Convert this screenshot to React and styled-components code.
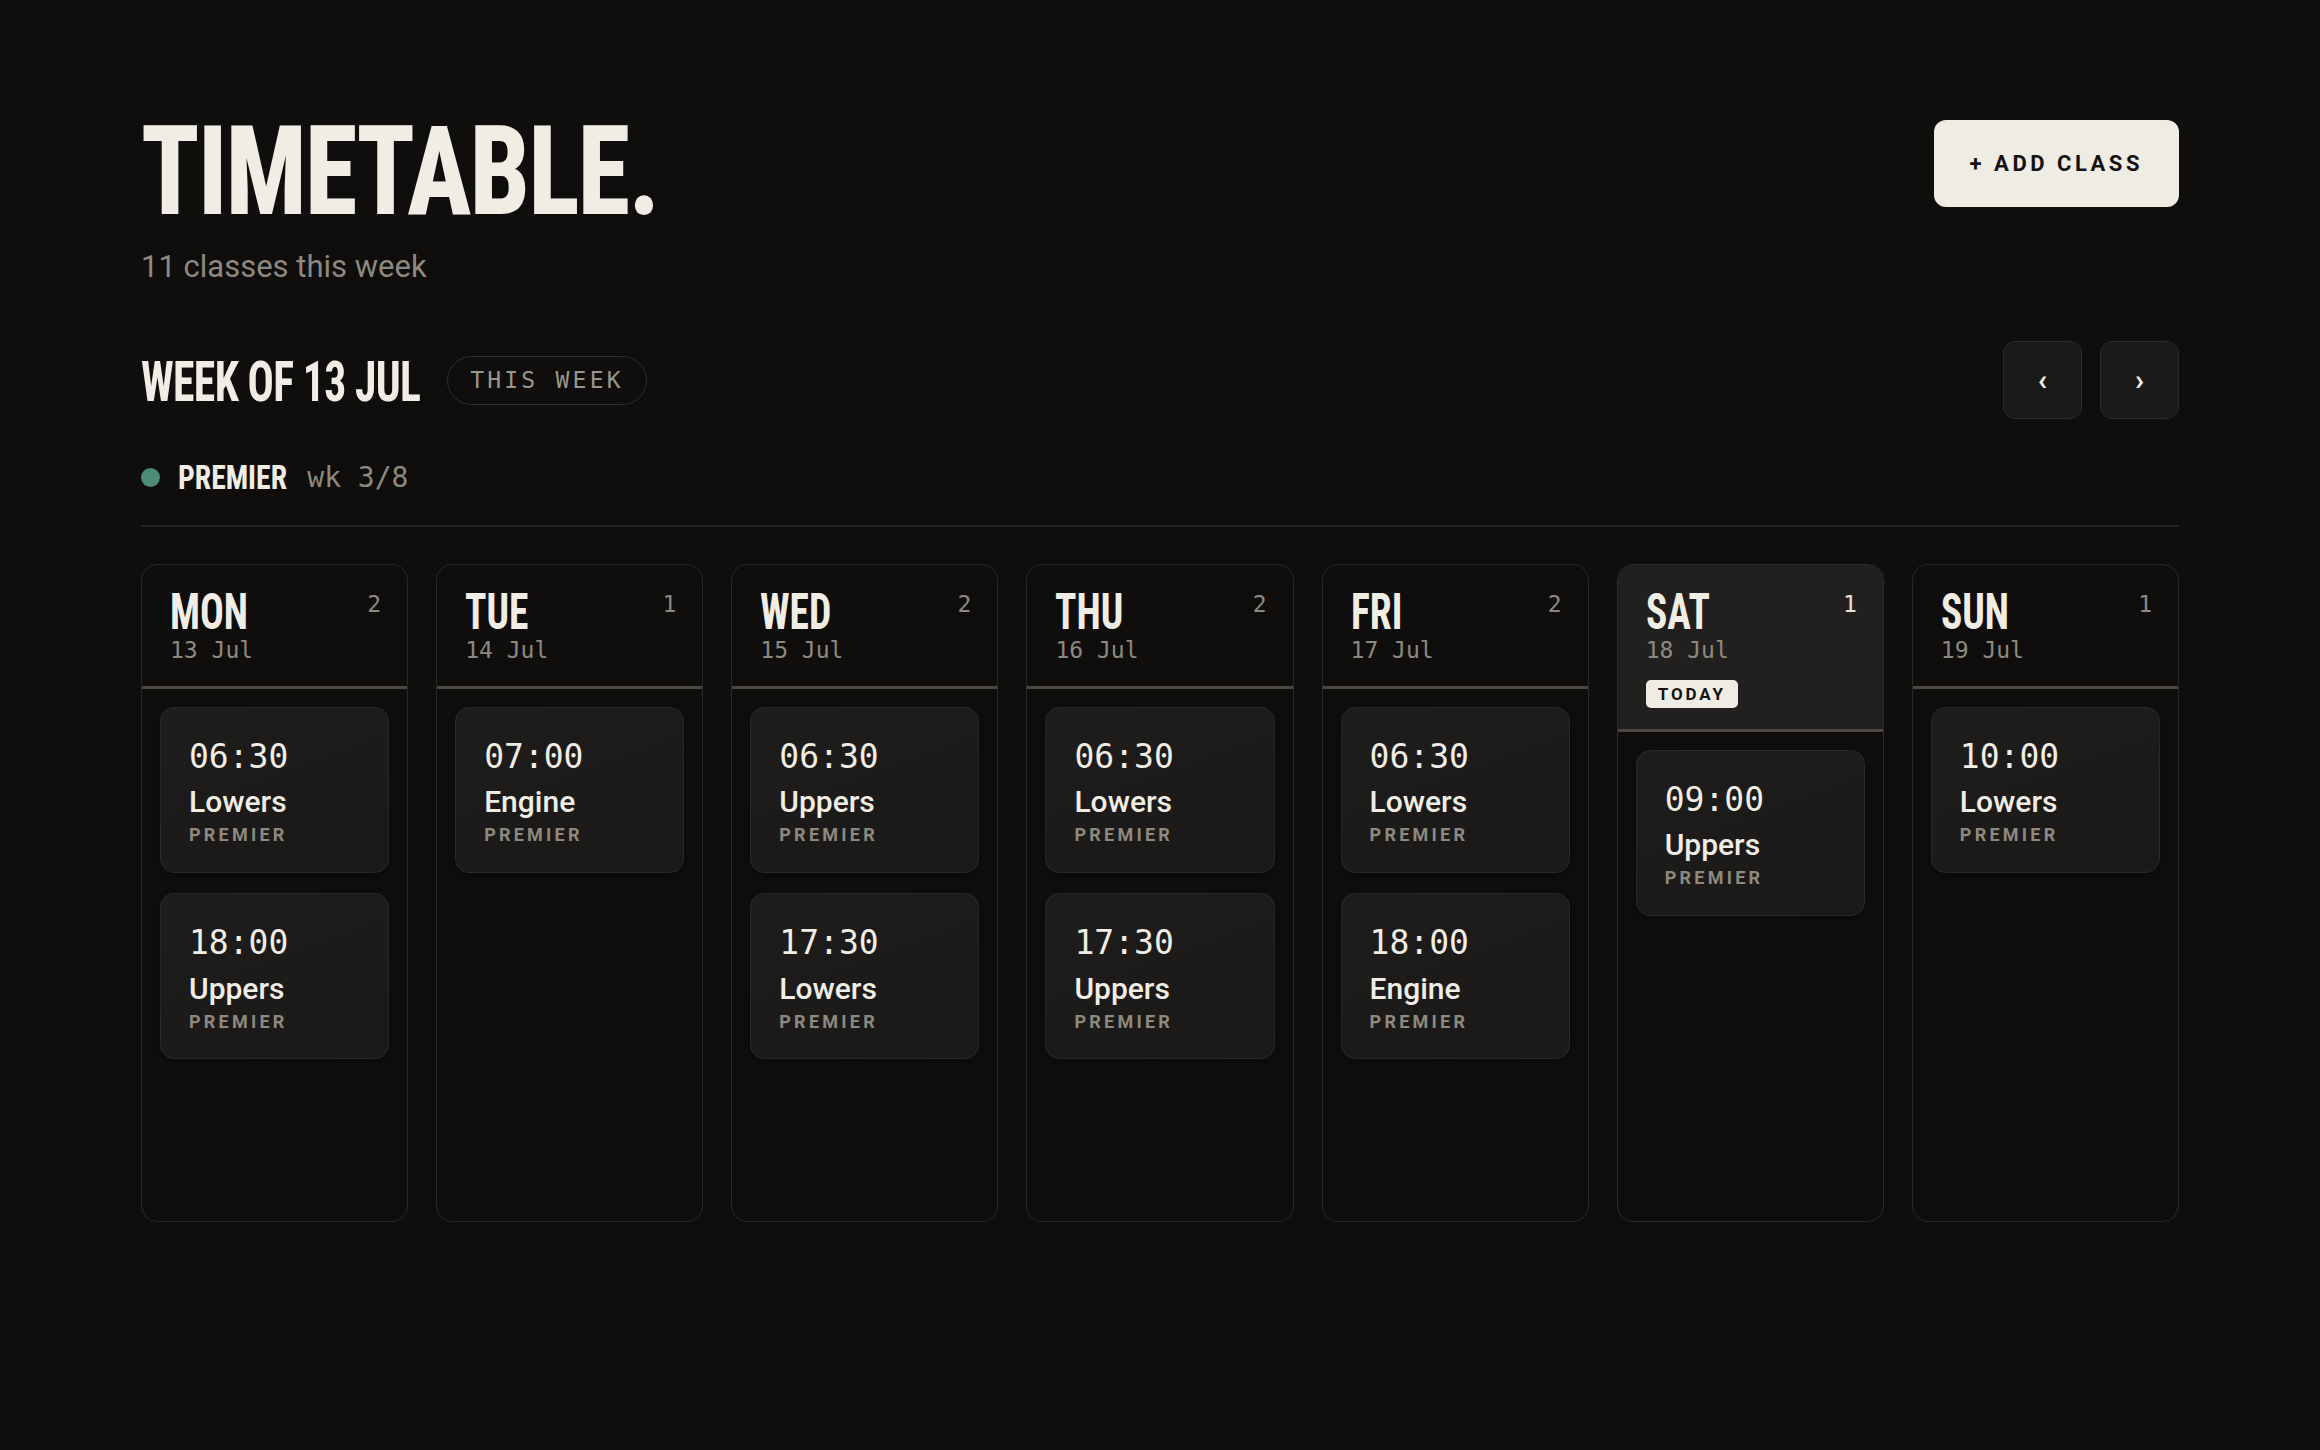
import React from 'react';
import styled, { createGlobalStyle, css } from 'styled-components';

const display = `"Roboto Condensed", "Liberation Sans Narrow", "DejaVu Sans Condensed", "DejaVu Sans", sans-serif`;
const body = `Roboto, "Liberation Sans", sans-serif`;
const mono = `"DejaVu Sans Mono", "Liberation Mono", monospace`;

// the design face is narrower than any condensed family we have, so squeeze it
const squeeze = (x) => css`
    display: inline-block;
    transform: scaleX(${x});
    transform-origin: left center;
`;

const GlobalStyle = createGlobalStyle`
    html, body {
        margin: 0;
        padding: 0;
        background: #0f0e0c;
    }
    body {
        font-family: ${body};
        color: #f0ede5;
    }
    * {
        box-sizing: border-box;
    }
`;

const days = [
    { name: 'MON', date: '13 Jul', classes: [{ time: '06:30', title: 'Lowers' }, { time: '18:00', title: 'Uppers' }] },
    { name: 'TUE', date: '14 Jul', classes: [{ time: '07:00', title: 'Engine' }] },
    { name: 'WED', date: '15 Jul', classes: [{ time: '06:30', title: 'Uppers' }, { time: '17:30', title: 'Lowers' }] },
    { name: 'THU', date: '16 Jul', classes: [{ time: '06:30', title: 'Lowers' }, { time: '17:30', title: 'Uppers' }] },
    { name: 'FRI', date: '17 Jul', classes: [{ time: '06:30', title: 'Lowers' }, { time: '18:00', title: 'Engine' }] },
    { name: 'SAT', date: '18 Jul', today: true, classes: [{ time: '09:00', title: 'Uppers' }] },
    { name: 'SUN', date: '19 Jul', classes: [{ time: '10:00', title: 'Lowers' }] },
];

export default function App() {
    const total = days.reduce((n, d) => n + d.classes.length, 0);

    return (
        <>
            <GlobalStyle />
            <Page>
                <TopRow>
                    <div>
                        <Title>TIMETABLE.</Title>
                        <Subtitle>{total} classes this week</Subtitle>
                    </div>
                    <AddButton>+ ADD CLASS</AddButton>
                </TopRow>

                <WeekRow>
                    <WeekLeft>
                        <WeekTitle>WEEK OF 13 JUL</WeekTitle>
                        <Pill>THIS WEEK</Pill>
                    </WeekLeft>
                    <NavGroup>
                        <NavButton aria-label="Previous week">‹</NavButton>
                        <NavButton aria-label="Next week">›</NavButton>
                    </NavGroup>
                </WeekRow>

                <Legend>
                    <Dot />
                    <LegendName>PREMIER</LegendName>
                    <LegendMeta>wk 3/8</LegendMeta>
                </Legend>

                <Divider />

                <Grid>
                    {days.map((day) => (
                        <Column key={day.name} $today={day.today}>
                            <ColumnHeader $today={day.today}>
                                <HeaderTop>
                                    <DayName>{day.name}</DayName>
                                    <Count $today={day.today}>{day.classes.length}</Count>
                                </HeaderTop>
                                <DayDate>{day.date}</DayDate>
                                {day.today && <TodayBadge>TODAY</TodayBadge>}
                            </ColumnHeader>
                            <ColumnBody>
                                {day.classes.map((c) => (
                                    <ClassCard key={c.time}>
                                        <Time>{c.time}</Time>
                                        <ClassName>{c.title}</ClassName>
                                        <Program>PREMIER</Program>
                                    </ClassCard>
                                ))}
                            </ColumnBody>
                        </Column>
                    ))}
                </Grid>
            </Page>
        </>
    );
}

const Page = styled.div`
    padding: 110px 141px 120px 141px;
    min-height: 1450px;
`;

const TopRow = styled.div`
    display: flex;
    justify-content: space-between;
    align-items: flex-start;
`;

const Title = styled.h1`
    margin: 0;
    font-family: ${display};
    font-stretch: condensed;
    font-weight: 800;
    font-size: 124px;
    line-height: 1;
    letter-spacing: -0.015em;
    color: #f0ede5;
    ${squeeze(0.86)}
`;

const Subtitle = styled.p`
    margin: 14px 0 0;
    font-size: 31px;
    line-height: 1.2;
    color: #8e897f;
`;

const AddButton = styled.button`
    margin-top: 10px;
    height: 87px;
    padding: 0 36px;
    border: none;
    border-radius: 12px;
    background: #efece4;
    color: #141210;
    font-family: ${body};
    font-weight: 700;
    font-size: 22px;
    letter-spacing: 0.16em;
    cursor: pointer;
`;

const WeekRow = styled.div`
    margin-top: 56px;
    display: flex;
    justify-content: space-between;
    align-items: center;
`;

const WeekLeft = styled.div`
    display: flex;
    align-items: center;
    gap: 28px;
`;

const WeekTitle = styled.h2`
    margin: 4px -80px 0 0;
    font-family: ${display};
    font-stretch: condensed;
    font-weight: 700;
    font-size: 56px;
    line-height: 1;
    letter-spacing: -0.015em;
    color: #f0ede5;
    ${squeeze(0.78)}
`;

const Pill = styled.span`
    display: inline-flex;
    align-items: center;
    height: 49px;
    padding: 0 22px;
    border: 1.5px solid #302d2a;
    border-radius: 999px;
    font-family: ${mono};
    font-size: 23px;
    letter-spacing: 0.14em;
    color: #9b968c;
`;

const NavGroup = styled.div`
    display: flex;
    gap: 18px;
`;

const NavButton = styled.button`
    width: 79px;
    height: 78px;
    border-radius: 12px;
    border: 1.5px solid #2d2a27;
    background: #1b1a18;
    color: #f0ede5;
    font-family: ${body};
    font-weight: 700;
    font-size: 30px;
    line-height: 1;
    cursor: pointer;
`;

const Legend = styled.div`
    margin-top: 40px;
    height: 36px;
    display: flex;
    align-items: center;
    gap: 18px;
`;

const Dot = styled.span`
    width: 19px;
    height: 19px;
    border-radius: 50%;
    background: #4a8c75;
`;

const LegendName = styled.span`
    margin-right: -14px;
    font-family: ${display};
    font-stretch: condensed;
    font-weight: 700;
    font-size: 34px;
    line-height: 1;
    color: #f0ede5;
    ${squeeze(0.87)}
`;

const LegendMeta = styled.span`
    font-family: ${mono};
    font-size: 28px;
    color: #8e897f;
`;

const Divider = styled.hr`
    margin: 30px 0 0;
    border: none;
    height: 2px;
    background: #232120;
`;

const Grid = styled.div`
    margin-top: 37px;
    display: grid;
    grid-template-columns: repeat(7, 1fr);
    gap: 28px;
`;

const Column = styled.div`
    min-height: 658px;
    border: 1.5px solid #2a2826;
    border-radius: 16px;
    overflow: hidden;
    display: flex;
    flex-direction: column;
    background: #0f0e0c;
    ${(p) => p.$today && css`
        border-color: #2e2b28;
    `}
`;

const ColumnHeader = styled.div`
    padding: 22px 26px 21px 28px;
    border-bottom: 3px solid #4b4741;
    background: ${(p) => (p.$today ? '#22201e' : 'transparent')};
`;

const HeaderTop = styled.div`
    display: flex;
    justify-content: space-between;
    align-items: flex-start;
`;

const DayName = styled.div`
    font-family: ${display};
    font-stretch: condensed;
    font-weight: 700;
    font-size: 50px;
    line-height: 1;
    color: #f0ede5;
    ${squeeze(0.79)}
`;

const Count = styled.span`
    margin-top: 4px;
    font-family: ${mono};
    font-size: 23px;
    line-height: 1.2;
    color: ${(p) => (p.$today ? '#e6e2d9' : '#8e897f')};
`;

const DayDate = styled.div`
    font-family: ${mono};
    font-size: 23px;
    line-height: 1.2;
    color: #8e897f;
`;

const TodayBadge = styled.span`
    display: inline-flex;
    align-items: center;
    margin-top: 15px;
    height: 28px;
    padding: 0 12px;
    border-radius: 5px;
    background: #efece4;
    color: #141210;
    font-family: ${body};
    font-weight: 700;
    font-size: 17px;
    letter-spacing: 0.17em;
`;

const ColumnBody = styled.div`
    padding: 18px;
    display: flex;
    flex-direction: column;
    gap: 20px;
`;

const ClassCard = styled.div`
    padding: 29px 28px 26px;
    border: 1.5px solid #2b2927;
    border-radius: 14px;
    background: linear-gradient(160deg, #1e1d1b 0%, #1a1917 100%);
    box-shadow: 0 2px 6px rgba(0, 0, 0, 0.35);
`;

const Time = styled.div`
    font-family: ${mono};
    font-size: 33px;
    line-height: 1.2;
    color: #f0ede5;
`;

const ClassName = styled.div`
    margin-top: 8px;
    font-family: ${body};
    font-weight: 500;
    font-size: 30px;
    line-height: 1.2;
    color: #f0ede5;
`;

const Program = styled.div`
    margin-top: 4px;
    font-family: ${body};
    font-weight: 700;
    font-size: 18px;
    line-height: 1.2;
    letter-spacing: 0.18em;
    color: #8e897f;
`;
